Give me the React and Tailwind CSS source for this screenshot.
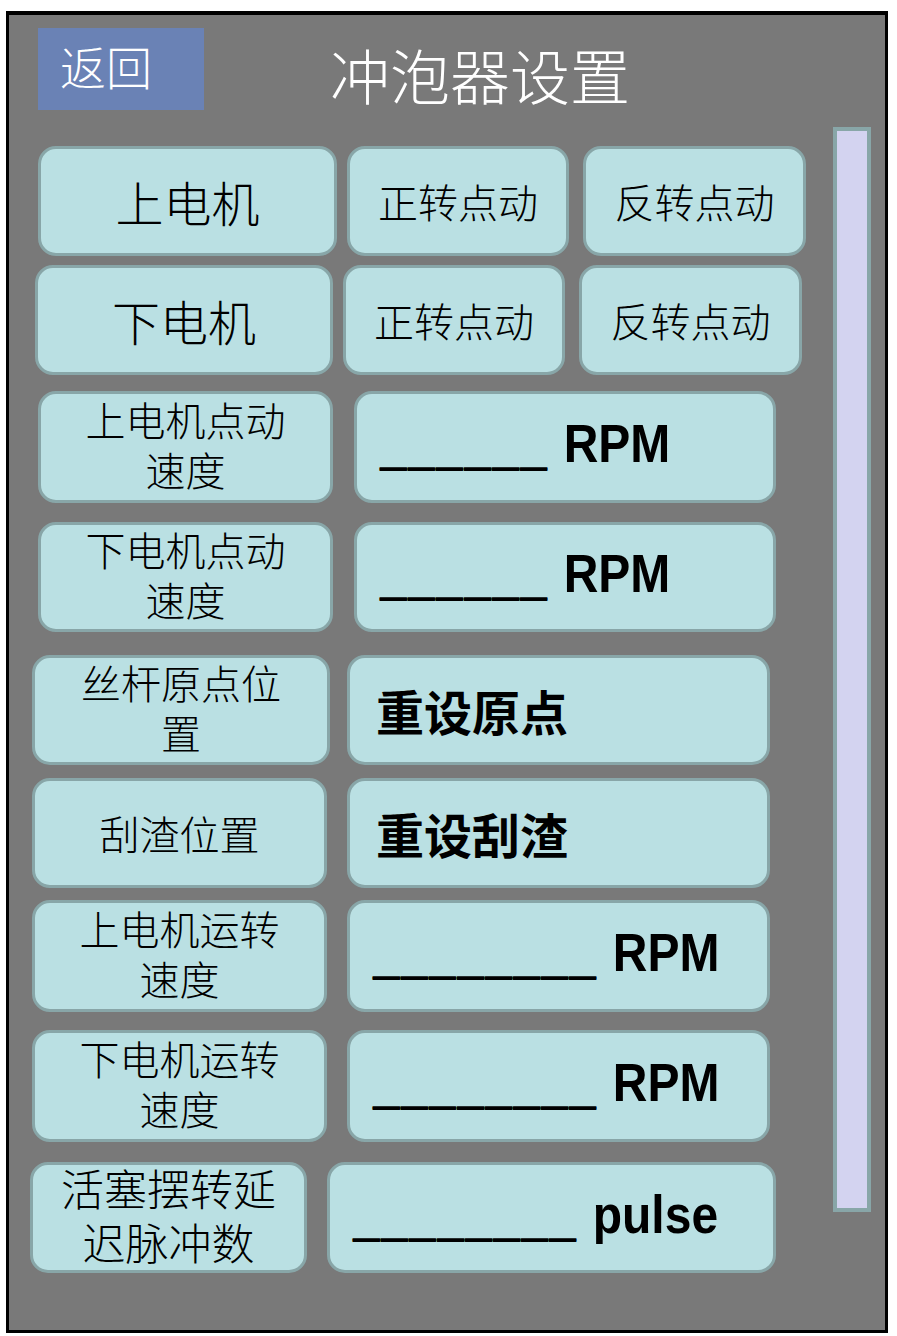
import React from "react";

const cjk = { fontFamily: '"Noto Sans CJK SC", "Noto Sans", sans-serif' };
const lbl = { fontFamily: '"Liberation Sans", "Noto Sans CJK SC", sans-serif' };
const lat = { fontFamily: '"Liberation Sans", Arial, sans-serif' };

function Btn({ w, h = 110, className = "", children }) {
  return (
    <div
      className={`flex shrink-0 items-center rounded-[18px] border-[3px] border-[#88a6a8] bg-[#bae0e3] text-black ${className}`}
      style={{ width: w, height: h }}
    >
      {children}
    </div>
  );
}

function Label({ lines, size = "text-[40px]", leading = "leading-[50px]" }) {
  return (
    <div className={`w-full text-center font-light ${size} ${leading}`} style={lines.length > 1 ? lbl : cjk}>
      {lines.map((l, i) => (
        <div key={i}>{l}</div>
      ))}
    </div>
  );
}

function Value({ under, unit, pl = "pl-[23px]" }) {
  return (
    <div className={`flex items-baseline whitespace-pre text-[48px] font-bold leading-none ${pl}`} style={lat}>
      <span className="tracking-[1.35px] [text-shadow:0_1px_0_#000,0_2px_0_#000]">{under}</span>
      <span>{" "}</span>
      <span className="ml-[2px] inline-block origin-bottom scale-y-110">{unit}</span>
    </div>
  );
}

export default function App() {
  return (
    <div className="min-h-[1336px] bg-white pl-[6px] pt-[11px]">
      <div className="h-[1322px] w-[882px] border-[3px] border-t-[4px] border-black bg-[#797979]">
        <div className="flex h-[112px] items-start">
          <div
            className="ml-[29px] mt-[13px] flex h-[82px] w-[166px] items-center pb-[8px] pl-[22px] text-[46px] font-light leading-none text-white bg-[#6a82b5]"
            style={cjk}
          >
            返回
          </div>
          <div className="ml-[126px] mt-[29px] text-[60px] font-light leading-none text-white" style={cjk}>
            冲泡器设置
          </div>
        </div>
        <div className="flex items-start">
          <div className="w-[824px] pt-[19px]">
            <div className="ml-[29px] flex gap-[10px]">
              <Btn w={299}><Label lines={["上电机"]} size="text-[48px]" /></Btn>
              <Btn w={222}><Label lines={["正转点动"]} /></Btn>
              <Btn w={223} className="ml-[4px]"><Label lines={["反转点动"]} /></Btn>
            </div>
            <div className="ml-[26px] mt-[9px] flex gap-[10px]">
              <Btn w={298}><Label lines={["下电机"]} size="text-[48px]" /></Btn>
              <Btn w={222}><Label lines={["正转点动"]} /></Btn>
              <Btn w={223} className="ml-[4px]"><Label lines={["反转点动"]} /></Btn>
            </div>
            <div className="ml-[29px] mt-[16px] flex gap-[21px]">
              <Btn w={295} h={112}><Label lines={["上电机点动", "速度"]} /></Btn>
              <Btn w={422} h={112}><Value under="______" unit="RPM" /></Btn>
            </div>
            <div className="ml-[29px] mt-[19px] flex gap-[21px]">
              <Btn w={295}><Label lines={["下电机点动", "速度"]} /></Btn>
              <Btn w={422}><Value under="______" unit="RPM" /></Btn>
            </div>
            <div className="ml-[23px] mt-[23px] flex gap-[17px]">
              <Btn w={298}><Label lines={["丝杆原点位", "置"]} /></Btn>
              <Btn w={423}>
                <div className="pl-[26px] text-[48px] font-bold leading-none" style={cjk}>重设原点</div>
              </Btn>
            </div>
            <div className="ml-[23px] mt-[13px] flex gap-[20px]">
              <Btn w={295}><Label lines={["刮渣位置"]} /></Btn>
              <Btn w={423}>
                <div className="pl-[26px] text-[48px] font-bold leading-none" style={cjk}>重设刮渣</div>
              </Btn>
            </div>
            <div className="ml-[23px] mt-[12px] flex gap-[20px]">
              <Btn w={295} h={112}><Label lines={["上电机运转", "速度"]} /></Btn>
              <Btn w={423} h={112}><Value under="________" unit="RPM" /></Btn>
            </div>
            <div className="ml-[23px] mt-[18px] flex gap-[20px]">
              <Btn w={295} h={112}><Label lines={["下电机运转", "速度"]} /></Btn>
              <Btn w={423} h={112}><Value under="________" unit="RPM" /></Btn>
            </div>
            <div className="ml-[21px] mt-[20px] flex gap-[20px]">
              <Btn w={277} h={111}><Label lines={["活塞摆转延", "迟脉冲数"]} size="text-[43px]" leading="leading-[54px]" /></Btn>
              <Btn w={449} h={111}><Value under="________" unit="pulse" /></Btn>
            </div>
          </div>
          <div className="h-[1085px] w-[38px] border-[4px] border-[#88a6a8] bg-[#d3d3f0]" />
        </div>
      </div>
    </div>
  );
}
